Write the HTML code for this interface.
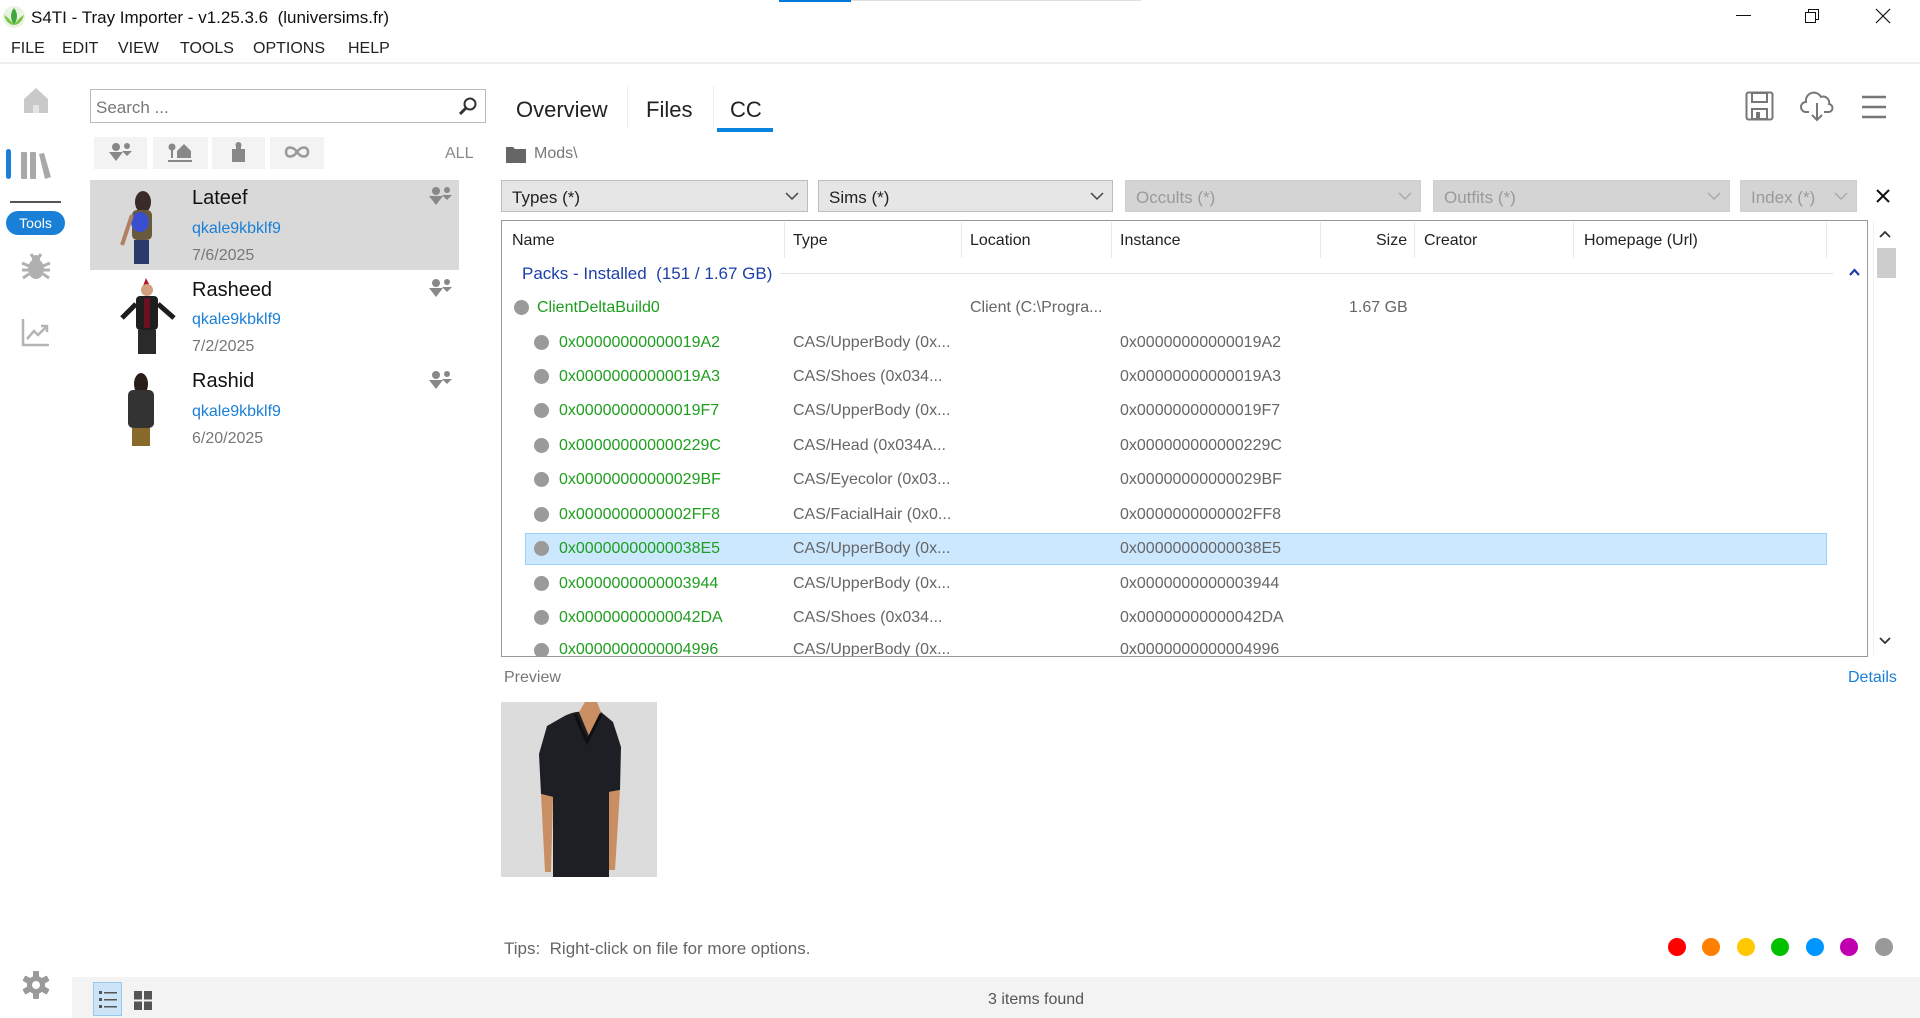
<!DOCTYPE html>
<html><head><meta charset="utf-8"><style>
*{margin:0;padding:0;box-sizing:border-box}
body{width:1920px;height:1018px;overflow:hidden;background:#fff;font-family:"Liberation Sans",sans-serif;color:#222;position:relative}
.a{position:absolute;white-space:nowrap}
.menu span{position:absolute;top:40px;font-size:16px;color:#222}
.dd{position:absolute;top:180px;height:32px;background:#e6e6e6;border:1px solid #bdbdbd;font-size:17px;color:#222;padding:7px 0 0 10px}
.dd.dis{background:#d4d4d4;border-color:#cfcfcf;color:#9a9a9a}
.dd svg{position:absolute;right:8px;top:10px}
.th{position:absolute;top:232px;font-size:16px;color:#222}
.vs{position:absolute;top:222px;width:1px;height:36px;background:#e8e8e8}
.row{position:absolute;font-size:16px;height:20px}
.dot{position:absolute;width:15px;height:15px;border-radius:50%;background:#9a9a9a}
.g{color:#1e9e1e}
.gr{color:#666}
.sim .n{position:absolute;left:192px;font-size:20px;color:#111}
.sim .i{position:absolute;left:192px;font-size:16px;color:#1a7fd6}
.sim .d{position:absolute;left:192px;font-size:16px;color:#777}
.cd{position:absolute;top:938px;width:18px;height:18px;border-radius:50%}
</style></head><body>
<svg class="a" style="left:2px;top:5px" width="24" height="24" viewBox="0 0 24 24"><circle cx="12" cy="12" r="11" fill="#eaf3e2"/><path d="M12 3 C8 8 8 14 12 20 C16 14 16 8 12 3Z" fill="#3fa83a"/><path d="M2 10 C4 17 8 20 12 20 C9 16 6 12 2 10Z" fill="#7cc443"/><path d="M22 10 C20 17 16 20 12 20 C15 16 18 12 22 10Z" fill="#7cc443"/></svg>
<div class="a" style="left:31px;top:8px;font-size:17px;color:#111">S4TI - Tray Importer - v1.25.3.6&nbsp; (luniversims.fr)</div>
<div class="a" style="left:779px;top:0;width:72px;height:2px;background:#0078d7"></div>
<div class="a" style="left:851px;top:0;width:290px;height:1px;background:#e0e0e0"></div>
<div class="a" style="left:1736px;top:15px;width:15px;height:1px;background:#111"></div>
<svg class="a" style="left:1804px;top:8px" width="16" height="16"><rect x="1.5" y="4.5" width="10" height="10" fill="none" stroke="#111"/><path d="M4.5 4.5V1.5H14.5V11.5H11.5" fill="none" stroke="#111"/></svg>
<svg class="a" style="left:1875px;top:8px" width="16" height="16"><path d="M1 1L15 15M15 1L1 15" stroke="#111" stroke-width="1.2"/></svg>
<div class="menu"><span style="left:11px">FILE</span><span style="left:62px">EDIT</span><span style="left:118px">VIEW</span><span style="left:180px">TOOLS</span><span style="left:253px">OPTIONS</span><span style="left:348px">HELP</span></div>
<div class="a" style="left:0;top:62px;width:1920px;height:2px;background:#eeeeee"></div>
<svg class="a" style="left:22px;top:86px" width="28" height="28" viewBox="0 0 28 28"><path d="M14 2L2 13V27H26V13Z" fill="#c9c9c9"/><path d="M11 27V19H17V27" fill="#e4e4e4"/></svg>
<div class="a" style="left:6px;top:149px;width:5px;height:30px;border-radius:3px;background:#1a7fd6"></div>
<svg class="a" style="left:20px;top:150px" width="32" height="30"><rect x="1" y="2" width="6" height="27" rx="1" fill="#a8a8a8"/><rect x="10" y="2" width="6" height="27" rx="1" fill="#a8a8a8"/><path d="M19 4L24 3L31 27L25 29Z" fill="#a8a8a8"/></svg>
<div class="a" style="left:10px;top:201px;width:51px;height:2px;background:#555"></div>
<div class="a" style="left:6px;top:211px;width:59px;height:24px;border-radius:12px;background:#1a7fd6;color:#fff;font-size:14px;text-align:center;line-height:24px">Tools</div>
<svg class="a" style="left:20px;top:251px" width="32" height="32" viewBox="0 0 32 32"><ellipse cx="16" cy="18" rx="8" ry="10" fill="#b0b0b0"/><circle cx="16" cy="8" r="4" fill="#b0b0b0"/><path d="M2 12L9 15M2 19H9M3 27L9 23M30 12L23 15M30 19H23M29 27L23 23M11 3L13 6M21 3L19 6" stroke="#b0b0b0" stroke-width="3"/></svg>
<svg class="a" style="left:21px;top:317px" width="30" height="30"><path d="M2 2V28H28" fill="none" stroke="#b4b4b4" stroke-width="2.5"/><path d="M6 22L13 14L17 18L26 9M20 9H26V15" fill="none" stroke="#b4b4b4" stroke-width="2.5"/></svg>
<svg class="a" style="left:21px;top:970px" width="30" height="30" viewBox="0 0 30 30"><g fill="#9a9a9a"><circle cx="15" cy="15" r="9"/><rect x="12" y="1" width="6" height="28" rx="1"/><rect x="12" y="1" width="6" height="28" rx="1" transform="rotate(60 15 15)"/><rect x="12" y="1" width="6" height="28" rx="1" transform="rotate(120 15 15)"/></g><circle cx="15" cy="15" r="4" fill="#fff"/></svg>
<div class="a" style="left:90px;top:89px;width:396px;height:34px;border:1px solid #bbb;background:#fff"></div>
<div class="a" style="left:96px;top:98px;font-size:17px;color:#777">Search ...</div>
<svg class="a" style="left:458px;top:96px" width="20" height="20"><circle cx="12" cy="8" r="5.5" fill="none" stroke="#333" stroke-width="2"/><path d="M8 12L2 18" stroke="#333" stroke-width="3"/></svg>
<div class="a" style="left:94px;top:137px;width:53px;height:32px;background:#f3f3f3"></div>
<div class="a" style="left:153px;top:137px;width:55px;height:32px;background:#f3f3f3"></div>
<div class="a" style="left:212px;top:137px;width:53px;height:32px;background:#f3f3f3"></div>
<div class="a" style="left:270px;top:137px;width:54px;height:32px;background:#f3f3f3"></div>
<svg class="a" style="left:108px;top:142px" width="26" height="22"><g fill="#888"><circle cx="8" cy="5" r="4"/><circle cx="19" cy="4" r="3"/><path d="M1 10H15L8 19Z"/><path d="M14 9H24L19 14Z"/></g></svg>
<svg class="a" style="left:167px;top:142px" width="26" height="22"><g fill="#888"><circle cx="5" cy="5" r="3.5"/><rect x="4" y="8" width="2" height="8"/><path d="M10 9L17 2L24 9V16H10Z"/><rect x="1" y="18" width="24" height="2"/></g></svg>
<svg class="a" style="left:228px;top:142px" width="22" height="22"><path d="M4 7H8V3H13V7H17V20H4Z" fill="#888"/><circle cx="10.5" cy="3" r="3" fill="#888"/></svg>
<svg class="a" style="left:283px;top:144px" width="28" height="16"><path d="M14 8C10 2 3 2 3 8S10 14 14 8S25 2 25 8S18 14 14 8" fill="none" stroke="#999" stroke-width="2.5"/></svg>
<div class="a" style="left:445px;top:145px;font-size:16px;color:#888">ALL</div>
<div class="a" style="left:90px;top:180px;width:369px;height:90px;background:#d9d9d9"></div>
<div class="sim">
<div class="n" style="top:187px">Lateef</div><div class="i" style="top:220px">qkale9kbklf9</div><div class="d" style="top:247px">7/6/2025</div>
<div class="n" style="top:279px">Rasheed</div><div class="i" style="top:311px">qkale9kbklf9</div><div class="d" style="top:338px">7/2/2025</div>
<div class="n" style="top:370px">Rashid</div><div class="i" style="top:403px">qkale9kbklf9</div><div class="d" style="top:430px">6/20/2025</div>
</div>
<svg class="a" style="left:118px;top:190px" width="50" height="76"><ellipse cx="25" cy="12" rx="8" ry="11" fill="#3a2b2a"/><rect x="14" y="20" width="20" height="30" rx="5" fill="#6a5a3c"/><ellipse cx="22" cy="32" rx="9" ry="10" fill="#3a4fd0"/><rect x="16" y="50" width="15" height="24" fill="#2a3a6a"/><path d="M14 25L4 55" stroke="#b08060" stroke-width="4"/></svg>
<svg class="a" style="left:118px;top:276px" width="62" height="80"><path d="M28 2L32 10H25Z" fill="#b01830"/><circle cx="29" cy="14" r="6" fill="#d0a080"/><rect x="18" y="20" width="22" height="34" rx="4" fill="#1e1e1e"/><rect x="26" y="22" width="6" height="30" fill="#6a1020"/><path d="M18 28L4 42M40 28L56 42" stroke="#1e1e1e" stroke-width="5"/><rect x="20" y="54" width="18" height="24" fill="#2a2a2a"/></svg>
<svg class="a" style="left:118px;top:372px" width="50" height="76"><ellipse cx="23" cy="12" rx="7" ry="11" fill="#2a1e18"/><rect x="10" y="18" width="26" height="38" rx="5" fill="#333"/><rect x="14" y="56" width="18" height="18" fill="#8a6a2a"/></svg>
<svg class="a" style="left:428px;top:186px" width="26" height="22"><g fill="#888"><circle cx="8" cy="5" r="4"/><circle cx="19" cy="4" r="3"/><path d="M1 10H15L8 19Z"/><path d="M14 9H24L19 14Z"/></g></svg>
<svg class="a" style="left:428px;top:278px" width="26" height="22"><g fill="#888"><circle cx="8" cy="5" r="4"/><circle cx="19" cy="4" r="3"/><path d="M1 10H15L8 19Z"/><path d="M14 9H24L19 14Z"/></g></svg>
<svg class="a" style="left:428px;top:370px" width="26" height="22"><g fill="#888"><circle cx="8" cy="5" r="4"/><circle cx="19" cy="4" r="3"/><path d="M1 10H15L8 19Z"/><path d="M14 9H24L19 14Z"/></g></svg>
<div class="a" style="left:516px;top:97px;font-size:22px;color:#222">Overview</div>
<div class="a" style="left:627px;top:86px;width:1px;height:42px;background:#eee"></div>
<div class="a" style="left:646px;top:97px;font-size:22px;color:#222">Files</div>
<div class="a" style="left:713px;top:86px;width:1px;height:42px;background:#eee"></div>
<div class="a" style="left:730px;top:97px;font-size:22px;color:#222">CC</div>
<div class="a" style="left:717px;top:128px;width:56px;height:4px;background:#0a84e0"></div>
<svg class="a" style="left:1745px;top:91px" width="30" height="30"><rect x="1.5" y="1.5" width="26" height="27" rx="2" fill="none" stroke="#777" stroke-width="2"/><rect x="7" y="2" width="15" height="9" fill="none" stroke="#777" stroke-width="2"/><rect x="7" y="18" width="15" height="10" fill="none" stroke="#777" stroke-width="2"/><rect x="11" y="21" width="4" height="6" fill="#777"/></svg>
<svg class="a" style="left:1800px;top:90px" width="34" height="32"><path d="M9 22H6A5 5 0 0 1 6 12A8 8 0 0 1 21 7A6 6 0 0 1 29 14A4 4 0 0 1 28 22H24" fill="none" stroke="#777" stroke-width="2"/><path d="M17 13V30M12 25L17 30L22 25" fill="none" stroke="#777" stroke-width="2"/></svg>
<svg class="a" style="left:1861px;top:94px" width="26" height="26"><path d="M1 3H25M1 13H25M1 23H25" stroke="#777" stroke-width="2.5"/></svg>
<svg class="a" style="left:506px;top:145px" width="20" height="18"><path d="M0 2H7L9 4H20V18H0Z" fill="#666"/></svg>
<div class="a" style="left:534px;top:145px;font-size:16px;color:#777">Mods\</div>
<div class="dd" style="left:501px;width:307px">Types (*)<svg width="14" height="10"><path d="M1 2L7 8L13 2" fill="none" stroke="#444" stroke-width="1.5"/></svg></div>
<div class="dd" style="left:818px;width:295px">Sims (*)<svg width="14" height="10"><path d="M1 2L7 8L13 2" fill="none" stroke="#444" stroke-width="1.5"/></svg></div>
<div class="dd dis" style="left:1125px;width:296px">Occults (*)<svg width="14" height="10"><path d="M1 2L7 8L13 2" fill="none" stroke="#aaa" stroke-width="1.5"/></svg></div>
<div class="dd dis" style="left:1433px;width:297px">Outfits (*)<svg width="14" height="10"><path d="M1 2L7 8L13 2" fill="none" stroke="#aaa" stroke-width="1.5"/></svg></div>
<div class="dd dis" style="left:1740px;width:117px">Index (*)<svg width="14" height="10"><path d="M1 2L7 8L13 2" fill="none" stroke="#aaa" stroke-width="1.5"/></svg></div>
<svg class="a" style="left:1876px;top:189px" width="14" height="14"><path d="M1 1L13 13M13 1L1 13" stroke="#111" stroke-width="2"/></svg>
<div class="a" style="left:501px;top:220px;width:1367px;height:437px;border:1px solid #999"></div>
<div class="th" style="left:512px">Name</div><div class="th" style="left:793px">Type</div><div class="th" style="left:970px">Location</div><div class="th" style="left:1120px">Instance</div><div class="th" style="left:1376px">Size</div><div class="th" style="left:1424px">Creator</div><div class="th" style="left:1584px">Homepage (Url)</div>
<div class="vs" style="left:784px"></div><div class="vs" style="left:961px"></div><div class="vs" style="left:1111px"></div><div class="vs" style="left:1320px"></div><div class="vs" style="left:1414px"></div><div class="vs" style="left:1573px"></div><div class="vs" style="left:1826px"></div>
<div class="a" style="left:1873px;top:222px;width:1px;height:433px;background:#f0f0f0"></div>
<svg class="a" style="left:1879px;top:229px" width="12" height="10"><path d="M1 8L6 3L11 8" fill="none" stroke="#333" stroke-width="1.8"/></svg>
<div class="a" style="left:1877px;top:248px;width:19px;height:30px;background:#cdcdcd"></div>
<svg class="a" style="left:1879px;top:636px" width="12" height="10"><path d="M1 2L6 7L11 2" fill="none" stroke="#333" stroke-width="1.8"/></svg>
<div class="row" style="left:522px;top:264px;color:#1c3fa8;font-size:17px">Packs - Installed&nbsp; (151 / 1.67 GB)</div>
<div class="a" style="left:780px;top:273px;width:1053px;height:1px;background:#e2e2e2"></div>
<svg class="a" style="left:1849px;top:268px" width="11" height="8"><path d="M1 7L5.5 2L10 7" fill="none" stroke="#1c3fa8" stroke-width="2.2"/></svg>
<div class="a" style="left:525px;top:533px;width:1302px;height:32px;background:#cce8ff;border:1px solid #99d1ff"></div>
<div class="dot" style="left:514px;top:300px"></div>
<div class="row g" style="left:537px;top:299px">ClientDeltaBuild0</div>
<div class="row gr" style="left:970px;top:299px">Client (C:\Progra...</div>
<div class="row gr" style="left:1349px;top:299px">1.67 GB</div>
<div style="position:absolute;left:502px;top:642px;width:1370px;height:14px;overflow:hidden">
 <div class="dot" style="left:32px;top:1px"></div>
 <div class="row g" style="left:57px;top:-1px">0x0000000000004996</div>
 <div class="row gr" style="left:291px;top:-1px">CAS/UpperBody (0x...</div>
 <div class="row gr" style="left:618px;top:-1px">0x0000000000004996</div>
</div>
<div class="dot" style="left:534px;top:335px"></div><div class="row g" style="left:559px;top:334px">0x00000000000019A2</div><div class="row gr" style="left:793px;top:334px">CAS/UpperBody (0x...</div><div class="row gr" style="left:1120px;top:334px">0x00000000000019A2</div>
<div class="dot" style="left:534px;top:369px"></div><div class="row g" style="left:559px;top:368px">0x00000000000019A3</div><div class="row gr" style="left:793px;top:368px">CAS/Shoes (0x034...</div><div class="row gr" style="left:1120px;top:368px">0x00000000000019A3</div>
<div class="dot" style="left:534px;top:403px"></div><div class="row g" style="left:559px;top:402px">0x00000000000019F7</div><div class="row gr" style="left:793px;top:402px">CAS/UpperBody (0x...</div><div class="row gr" style="left:1120px;top:402px">0x00000000000019F7</div>
<div class="dot" style="left:534px;top:438px"></div><div class="row g" style="left:559px;top:437px">0x000000000000229C</div><div class="row gr" style="left:793px;top:437px">CAS/Head (0x034A...</div><div class="row gr" style="left:1120px;top:437px">0x000000000000229C</div>
<div class="dot" style="left:534px;top:472px"></div><div class="row g" style="left:559px;top:471px">0x00000000000029BF</div><div class="row gr" style="left:793px;top:471px">CAS/Eyecolor (0x03...</div><div class="row gr" style="left:1120px;top:471px">0x00000000000029BF</div>
<div class="dot" style="left:534px;top:507px"></div><div class="row g" style="left:559px;top:506px">0x0000000000002FF8</div><div class="row gr" style="left:793px;top:506px">CAS/FacialHair (0x0...</div><div class="row gr" style="left:1120px;top:506px">0x0000000000002FF8</div>
<div class="dot" style="left:534px;top:541px"></div><div class="row g" style="left:559px;top:540px">0x00000000000038E5</div><div class="row gr" style="left:793px;top:540px">CAS/UpperBody (0x...</div><div class="row gr" style="left:1120px;top:540px">0x00000000000038E5</div>
<div class="dot" style="left:534px;top:576px"></div><div class="row g" style="left:559px;top:575px">0x0000000000003944</div><div class="row gr" style="left:793px;top:575px">CAS/UpperBody (0x...</div><div class="row gr" style="left:1120px;top:575px">0x0000000000003944</div>
<div class="dot" style="left:534px;top:610px"></div><div class="row g" style="left:559px;top:609px">0x00000000000042DA</div><div class="row gr" style="left:793px;top:609px">CAS/Shoes (0x034...</div><div class="row gr" style="left:1120px;top:609px">0x00000000000042DA</div>
<div class="a" style="left:504px;top:669px;font-size:16px;color:#777">Preview</div>
<div class="a" style="left:1848px;top:669px;font-size:16px;color:#1a7fd6">Details</div>
<svg class="a" style="left:501px;top:702px" width="156" height="175"><rect width="156" height="175" fill="#dcdcdc"/><path d="M60 16Q72 8 86 10L100 10L112 20L120 45L119 88L108 90V175H52V95L40 92L38 52L46 24Z" fill="#1d1f25"/><path d="M40 92L44 170L50 170L52 95Z" fill="#c98f62"/><path d="M119 88L114 168L108 168L108 90Z" fill="#c98f62"/><path d="M78 10L84 0L96 0L100 10L88 34Z" fill="#c98f62"/><path d="M74 12L86 40L100 12" fill="none" stroke="#0e0f12" stroke-width="3"/></svg>
<div class="a" style="left:504px;top:939px;font-size:17px;color:#666">Tips:&nbsp; Right-click on file for more options.</div>
<div class="cd" style="left:1668px;background:#f00"></div>
<div class="cd" style="left:1702px;background:#ff7f00"></div>
<div class="cd" style="left:1737px;background:#ffc800"></div>
<div class="cd" style="left:1771px;background:#00c000"></div>
<div class="cd" style="left:1806px;background:#0096ff"></div>
<div class="cd" style="left:1840px;background:#c000b0"></div>
<div class="cd" style="left:1875px;background:#999"></div>
<div class="a" style="left:72px;top:977px;width:1848px;height:41px;background:#f3f3f3"></div>
<div class="a" style="left:93px;top:982px;width:29px;height:34px;background:#cce4f7;border:1px solid #99c9ef"></div>
<svg class="a" style="left:99px;top:990px" width="18" height="20"><g fill="#555"><rect x="0" y="1" width="3" height="3"/><rect x="5" y="2" width="13" height="1.5"/><rect x="0" y="8" width="3" height="3"/><rect x="5" y="9" width="13" height="1.5"/><rect x="0" y="15" width="3" height="3"/><rect x="5" y="16" width="13" height="1.5"/></g></svg>
<svg class="a" style="left:134px;top:991px" width="18" height="19"><g fill="#555"><rect x="0" y="0" width="8" height="8.5"/><rect x="10" y="0" width="8" height="8.5"/><rect x="0" y="10.5" width="8" height="8.5"/><rect x="10" y="10.5" width="8" height="8.5"/></g></svg>
<div class="a" style="left:988px;top:991px;font-size:16px;color:#555">3 items found</div>
</body></html>
